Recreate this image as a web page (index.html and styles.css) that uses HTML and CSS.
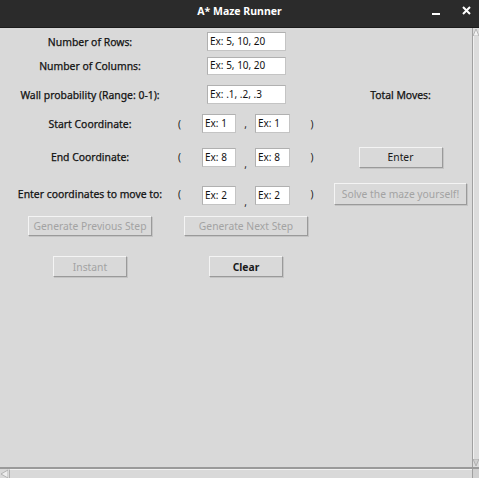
FILE: index.html
```html
<!DOCTYPE html>
<html>
<head>
<meta charset="utf-8">
<title>A* Maze Runner</title>
<link rel="stylesheet" href="styles.css">
</head>
<body>
<div class="window">
  <div class="titlebar">
    <span class="title">A* Maze Runner</span>
    <span class="winbtns">
      <span class="minimize"></span>
      <svg class="close" width="9" height="9" viewBox="0 0 9 9"><path d="M1 1 L8 8 M8 1 L1 8" stroke="#ffffff" stroke-width="2"/></svg>
    </span>
  </div>
  <div class="body">
    <div class="main">
      <div class="content">
        <div class="row r1">
          <div class="label">Number of Rows:</div>
          <div class="wide"><div class="entry big">Ex: 5, 10, 20</div></div>
        </div>
        <div class="row r2">
          <div class="label">Number of Columns:</div>
          <div class="wide"><div class="entry big">Ex: 5, 10, 20</div></div>
        </div>
        <div class="row r3">
          <div class="label">Wall probability (Range: 0-1):</div>
          <div class="wide"><div class="entry big">Ex: .1, .2, .3</div></div>
          <div class="label right">Total Moves:</div>
        </div>
        <div class="row r4">
          <div class="label">Start Coordinate:</div>
          <div class="paren">(</div>
          <div class="entry small">Ex: 1</div>
          <div class="comma">,</div>
          <div class="entry small">Ex: 1</div>
          <div class="paren close-p">)</div>
        </div>
        <div class="row r5">
          <div class="label">End Coordinate:</div>
          <div class="paren">(</div>
          <div class="entry small">Ex: 8</div>
          <div class="comma drop">,</div>
          <div class="entry small">Ex: 8</div>
          <div class="paren close-p">)</div>
          <div class="rightcell"><button class="btn enter">Enter</button></div>
        </div>
        <div class="row r6">
          <div class="label">Enter coordinates to move to:</div>
          <div class="paren">(</div>
          <div class="entry small">Ex: 2</div>
          <div class="comma drop">,</div>
          <div class="entry small">Ex: 2</div>
          <div class="paren close-p">)</div>
          <div class="rightcell"><button class="btn solve disabled">Solve the maze yourself!</button></div>
        </div>
        <div class="row r7">
          <div class="leftcell"><button class="btn gen disabled">Generate Previous Step</button></div>
          <div class="midcell"><button class="btn gen disabled">Generate Next Step</button></div>
        </div>
        <div class="row r8">
          <div class="leftcell"><button class="btn act disabled">Instant</button></div>
          <div class="midcell"><button class="btn act bold">Clear</button></div>
        </div>
      </div>
      <div class="vscroll">
        <svg class="arrow-up" width="6" height="8" viewBox="0 0 6 8"><path d="M0 8 L3 1 L6 8 Z" fill="#f2f2f2" stroke="#a8a8a8" stroke-width="0.8"/></svg>
        <div class="vtrack"></div>
        <svg class="arrow-down" width="6" height="8" viewBox="0 0 6 8"><path d="M0 0 L3 7 L6 0 Z" fill="#cfcfcf" stroke="#a8a8a8" stroke-width="0.8"/></svg>
      </div>
    </div>
    <div class="hscroll">
      <svg class="arrow-left" width="8" height="9" viewBox="0 0 8 9"><path d="M8 1 L1 5 L8 9 Z" fill="#eeeeee" stroke="#a8a8a8" stroke-width="0.8"/></svg>
      <div class="htrack"></div>
      <div class="corner"></div>
    </div>
  </div>
</div>
</body>
</html>
```

FILE: styles.css
```css
html, body {
  margin: 0;
  padding: 0;
  background: #d9d9d9;
}

body {
  font-family: "Noto Sans", "DejaVu Sans", sans-serif;
  font-size: 10px;
  color: #1a1a1a;
}

.window {
  width: 479px;
  height: 478px;
  display: flex;
  flex-direction: column;
  overflow: hidden;
}

.titlebar {
  height: 27px;
  flex: none;
  background: #2b2b2b;
  border-bottom: 1px solid #1c1c1c;
  display: flex;
  align-items: center;
  justify-content: center;
  position: relative;
  color: #ffffff;
}

.title {
  font-weight: bold;
  font-size: 10.5px;
  margin-top: -6px;
}

.winbtns {
  position: absolute;
  right: 8px;
  top: 6px;
  display: flex;
  align-items: center;
  gap: 22px;
}

.minimize {
  width: 8px;
  height: 2px;
  background: #ffffff;
  margin-top: 7px;
}

.close {
  display: block;
}

.body {
  flex: 1;
  display: flex;
  flex-direction: column;
}

.main {
  flex: 1;
  display: flex;
}

.content {
  flex: 1;
  padding-top: 4px;
  display: flex;
  flex-direction: column;
}

.row {
  display: grid;
  grid-template-columns: 176px 26px 34px 19px 35px 44px 133px;
  align-items: center;
}

.r1 { height: 19px; }
.r2 { height: 18px; margin-top: 6px; }
.r3 { height: 19px; margin-top: 10px; }
.r4 { height: 19px; margin-top: 10px; }
.r5 { height: 20px; margin-top: 11px; }
.r6 { height: 22px; margin-top: 15px; }
.r7 { height: 20px; margin-top: 15px; }
.r8 { height: 21px; margin-top: 20px; }

.label {
  text-align: center;
  padding-left: 4px;
  white-space: nowrap;
  line-height: 12px;
  font-size: 10.4px;
  color: #111111;
  -webkit-text-stroke: 0.25px #111111;
}

.label.right {
  grid-column: 7;
  padding-left: 0;
}

.wide {
  grid-column: 2 / 7;
  padding-left: 31px;
}

.entry {
  background: #ffffff;
  border: 1px solid #c4c4c4;
  border-top-color: #b0b0b0;
  border-left-color: #b0b0b0;
  box-sizing: border-box;
  height: 19px;
  line-height: 16px;
  padding-left: 2px;
  white-space: nowrap;
  overflow: hidden;
  color: #111111;
}

.entry.big {
  width: 79px;
}

.r2 .entry.big {
  height: 18px;
  line-height: 15px;
}

.entry.small {
  width: 100%;
}

.r6 .entry.small {
  margin-top: 3px;
}

.paren {
  padding-left: 2px;
  line-height: 12px;
}

.close-p {
  text-align: center;
  padding-left: 0;
}

.comma {
  text-align: center;
  line-height: 12px;
  font-size: 10px;
}

.comma.drop {
  align-self: start;
  padding-top: 14px;
}

.r6 .comma.drop {
  padding-top: 17px;
}

.rightcell {
  grid-column: 7;
  display: flex;
  justify-content: center;
}

.leftcell {
  grid-column: 1;
  display: flex;
  justify-content: center;
  padding-left: 4px;
}

.midcell {
  grid-column: 3 / 6;
  display: flex;
  justify-content: center;
}

.btn {
  font-family: "Noto Sans", "DejaVu Sans", sans-serif;
  font-size: 10.3px;
  color: #1a1a1a;
  background: #d9d9d9;
  border: 1px solid;
  border-color: #f4f4f4 #9a9a9a #9a9a9a #f4f4f4;
  box-shadow: 1px 1px 0 #c4c4c4;
  padding: 0;
  margin: 0;
  box-sizing: border-box;
  white-space: nowrap;
  flex: none;
}

.btn.disabled {
  color: #a3a3a3;
}

.btn.bold {
  font-weight: bold;
}

.enter {
  width: 84px;
  height: 21px;
}

.solve {
  width: 133px;
  height: 22px;
}

.gen {
  width: 124px;
  height: 20px;
}

.act {
  width: 74px;
  height: 21px;
}

.vscroll {
  width: 6px;
  flex: none;
  border-left: 1px solid #a0a0a0;
  background: #dcdcdc;
  display: flex;
  flex-direction: column;
  align-items: center;
}

.arrow-up, .arrow-down {
  display: block;
  flex: none;
}

.vtrack {
  flex: 1;
  width: 100%;
  border-left: 1px solid #f0f0f0;
  box-sizing: border-box;
}

.hscroll {
  height: 9px;
  flex: none;
  border-top: 2px solid #9a9a9a;
  display: flex;
  background: #d9d9d9;
}

.arrow-left {
  display: block;
  flex: none;
}

.htrack {
  flex: 1;
  border-top: 1px solid #f0f0f0;
  border-left: 1px solid #b0b0b0;
  margin-left: 1px;
}

.corner {
  width: 6px;
  border-left: 1px solid #a0a0a0;
  background: #d0d0d0;
}
```
